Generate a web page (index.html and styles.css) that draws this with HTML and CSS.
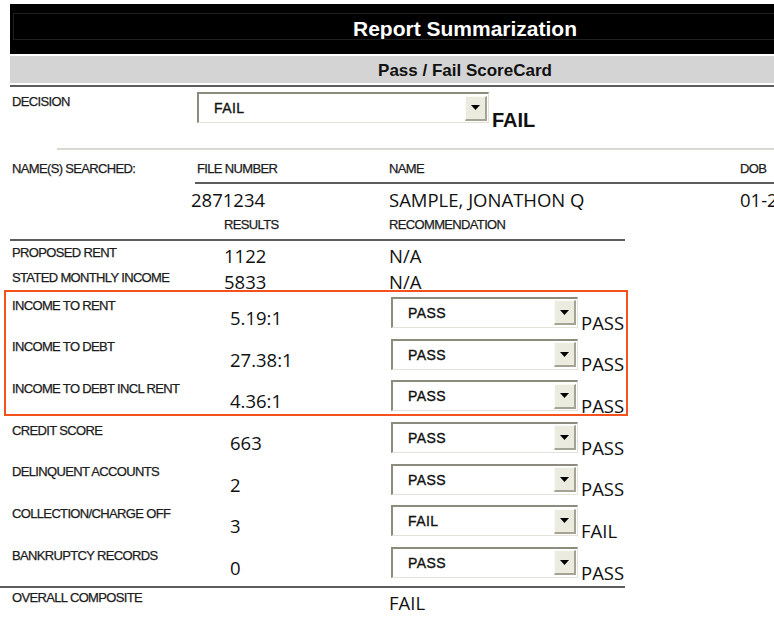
FILE: index.html
```html
<!DOCTYPE html>
<html>
<head>
<meta charset="utf-8">
<title>Report Summarization</title>
<link rel="stylesheet" href="styles.css">
</head>
<body>
<div class="sheet">
  <div class="banner">
    <div class="title-bar">Report Summarization</div>
    <div class="sub-bar">Pass / Fail ScoreCard</div>
    <div class="rule rule-dark"></div>
  </div>

  <div class="decision-row">
    <div class="label decision-label">DECISION</div>
    <div class="select select-wide">
      <span class="select-text">FAIL</span>
      <span class="select-btn"><svg width="9" height="5" viewBox="0 0 9 5"><polygon points="0,0 9,0 4.5,5" fill="#000"/></svg></span>
    </div>
    <div class="decision-result">FAIL</div>
  </div>
  <div class="rule rule-light"></div>

  <div class="grid head-row">
    <div class="label">NAME(S) SEARCHED:</div>
    <div class="label">FILE NUMBER</div>
    <div class="label">NAME</div>
    <div class="label">DOB</div>
  </div>
  <div class="rule rule-dark rule-file"></div>
  <div class="grid id-row">
    <div></div>
    <div class="value file-no">2871234</div>
    <div class="value">SAMPLE, JONATHON Q</div>
    <div class="value">01-23-1978</div>
  </div>
  <div class="grid col-head-row">
    <div></div>
    <div class="label indent">RESULTS</div>
    <div class="label">RECOMMENDATION</div>
  </div>
  <div class="rule rule-dark rule-results"></div>

  <div class="rows">
    <div class="highlight"></div>

    <div class="grid plain-row">
      <div class="label">PROPOSED RENT</div>
      <div class="value indent">1122</div>
      <div class="value">N/A</div>
    </div>
    <div class="grid plain-row">
      <div class="label">STATED MONTHLY INCOME</div>
      <div class="value indent">5833</div>
      <div class="value">N/A</div>
    </div>

    <div class="grid select-row">
      <div class="label">INCOME TO RENT</div>
      <div class="value indent-wide">5.19:1</div>
      <div class="rec">
        <div class="select"><span class="select-text">PASS</span><span class="select-btn"><svg width="9" height="5" viewBox="0 0 9 5"><polygon points="0,0 9,0 4.5,5" fill="#000"/></svg></span></div>
        <div class="result">PASS</div>
      </div>
    </div>
    <div class="grid select-row">
      <div class="label">INCOME TO DEBT</div>
      <div class="value indent-wide">27.38:1</div>
      <div class="rec">
        <div class="select"><span class="select-text">PASS</span><span class="select-btn"><svg width="9" height="5" viewBox="0 0 9 5"><polygon points="0,0 9,0 4.5,5" fill="#000"/></svg></span></div>
        <div class="result">PASS</div>
      </div>
    </div>
    <div class="grid select-row">
      <div class="label">INCOME TO DEBT INCL RENT</div>
      <div class="value indent-wide">4.36:1</div>
      <div class="rec">
        <div class="select"><span class="select-text">PASS</span><span class="select-btn"><svg width="9" height="5" viewBox="0 0 9 5"><polygon points="0,0 9,0 4.5,5" fill="#000"/></svg></span></div>
        <div class="result">PASS</div>
      </div>
    </div>
    <div class="grid select-row">
      <div class="label">CREDIT SCORE</div>
      <div class="value indent-wide">663</div>
      <div class="rec">
        <div class="select"><span class="select-text">PASS</span><span class="select-btn"><svg width="9" height="5" viewBox="0 0 9 5"><polygon points="0,0 9,0 4.5,5" fill="#000"/></svg></span></div>
        <div class="result">PASS</div>
      </div>
    </div>
    <div class="grid select-row">
      <div class="label">DELINQUENT ACCOUNTS</div>
      <div class="value indent-wide">2</div>
      <div class="rec">
        <div class="select"><span class="select-text">PASS</span><span class="select-btn"><svg width="9" height="5" viewBox="0 0 9 5"><polygon points="0,0 9,0 4.5,5" fill="#000"/></svg></span></div>
        <div class="result">PASS</div>
      </div>
    </div>
    <div class="grid select-row">
      <div class="label">COLLECTION/CHARGE OFF</div>
      <div class="value indent-wide">3</div>
      <div class="rec">
        <div class="select"><span class="select-text">FAIL</span><span class="select-btn"><svg width="9" height="5" viewBox="0 0 9 5"><polygon points="0,0 9,0 4.5,5" fill="#000"/></svg></span></div>
        <div class="result">FAIL</div>
      </div>
    </div>
    <div class="grid select-row">
      <div class="label">BANKRUPTCY RECORDS</div>
      <div class="value indent-wide">0</div>
      <div class="rec">
        <div class="select"><span class="select-text">PASS</span><span class="select-btn"><svg width="9" height="5" viewBox="0 0 9 5"><polygon points="0,0 9,0 4.5,5" fill="#000"/></svg></span></div>
        <div class="result">PASS</div>
      </div>
    </div>
  </div>

  <div class="rule rule-dark rule-bottom"></div>
  <div class="grid composite-row">
    <div class="label">OVERALL COMPOSITE</div>
    <div></div>
    <div class="value">FAIL</div>
  </div>
</div>
</body>
</html>
```

FILE: styles.css
```css
html, body {
  margin: 0;
  padding: 0;
  background: #ffffff;
  overflow: hidden;
}

.sheet {
  width: 930px;
  font-family: "Liberation Sans", Arial, sans-serif;
  color: #1a1a1a;
}

/* ---------- banner ---------- */
.banner {
  margin-left: 10px;
  width: 910px;
  padding-top: 4px;
}

.title-bar {
  position: relative;
  height: 50px;
  background: #000;
  color: #fff;
  font-weight: bold;
  font-size: 21px;
  line-height: 50px;
  text-align: center;
}

.title-bar::before {
  content: "";
  position: absolute;
  left: 3px;
  right: 3px;
  top: 9px;
  bottom: 14px;
  border: 1px solid #202020;
}

.sub-bar {
  margin-top: 2px;
  height: 27px;
  background: #d4d4d4;
  color: #111;
  font-weight: bold;
  font-size: 17px;
  line-height: 30px;
  text-align: center;
}

.rule {
  height: 2px;
}

.rule-dark {
  background: #5c5c5c;
}

.banner .rule-dark {
  margin-top: 2px;
}

.rule-light {
  margin-left: 57px;
  background: #d9d9d2;
}

/* ---------- common text ---------- */
.label {
  font-family: "Liberation Sans", Arial, sans-serif;
  font-size: 13px;
  line-height: 15px;
  letter-spacing: -0.65px;
  color: #1c1c1c;
  -webkit-text-stroke: 0.25px #1c1c1c;
  white-space: nowrap;
}

.value {
  font-family: "Open Sans", sans-serif;
  font-size: 18.5px;
  line-height: 25px;
  color: #111;
  white-space: nowrap;
}

.indent {
  padding-left: 27px;
}

.indent-wide {
  padding-left: 33px;
}

/* ---------- decision ---------- */
.decision-row {
  display: flex;
  align-items: flex-start;
  height: 61px;
  padding-left: 12px;
}

.decision-label {
  width: 185px;
  padding-top: 7px;
}

.decision-result {
  margin-left: 3px;
  margin-top: 22px;
  font-weight: bold;
  font-size: 20px;
  line-height: 23px;
  color: #111;
}

/* ---------- select box ---------- */
.select {
  box-sizing: border-box;
  width: 187px;
  height: 31px;
  margin-top: 5px;
  display: flex;
  align-items: center;
  background: #fff;
  border-top: 2px solid #8c8b7e;
  border-left: 2px solid #8c8b7e;
  border-right: 1px solid #e4e3da;
  border-bottom: 1px solid #e4e3da;
}

.select-wide {
  width: 292px;
}

.select-text {
  flex: 1;
  padding-left: 15px;
  font-family: "Liberation Sans", Arial, sans-serif;
  font-size: 14px;
  letter-spacing: 0.4px;
  color: #111;
  -webkit-text-stroke: 0.35px #111;
}

.select-btn {
  box-sizing: border-box;
  width: 22px;
  height: 25px;
  margin-right: 1px;
  display: flex;
  align-items: center;
  justify-content: center;
  background: #ecebdf;
  border-top: 1px solid #fbfbf6;
  border-left: 1px solid #fbfbf6;
  border-right: 2px solid #a5a494;
  border-bottom: 2px solid #a5a494;
}

/* ---------- grid rows ---------- */
.grid {
  display: grid;
  grid-template-columns: 185px 192px 351px 200px;
  padding-left: 12px;
  align-items: start;
}

.head-row {
  padding-top: 10.7px;
}

.rule-file {
  margin-top: 6.8px;
  margin-left: 195px;
}

.id-row {
  margin-top: 2.4px;
}

.file-no {
  margin-left: -6px;
}

.col-head-row {
  margin-top: 4.8px;
}

.rule-results {
  margin-top: 7.3px;
  margin-left: 10px;
  width: 615px;
}

.rows {
  position: relative;
}

.highlight {
  position: absolute;
  left: 4px;
  top: 49px;
  width: 624px;
  height: 126px;
  box-sizing: border-box;
  border: 2px solid #f4511e;
  pointer-events: none;
}

.plain-row {
  height: 25.5px;
}

.plain-row .label {
  padding-top: 3.6px;
}

.plain-row .value {
  padding-top: 2.4px;
}

.select-row {
  height: 41.67px;
}

.select-row .label {
  padding-top: 5.6px;
}

.select-row .value {
  padding-top: 13.2px;
}

.rec {
  display: flex;
  align-items: flex-start;
  height: 41.67px;
}

.rec .select {
  margin-left: 2px;
}

.result {
  margin-left: 3px;
  margin-top: 20.8px;
  font-family: "Open Sans", sans-serif;
  font-size: 18.5px;
  line-height: 20px;
  color: #111;
}

.rule-bottom {
  margin-top: 2.3px;
  width: 625px;
}

.composite-row .label {
  padding-top: 2.3px;
}

.composite-row .value {
  padding-top: 1.9px;
}
```
